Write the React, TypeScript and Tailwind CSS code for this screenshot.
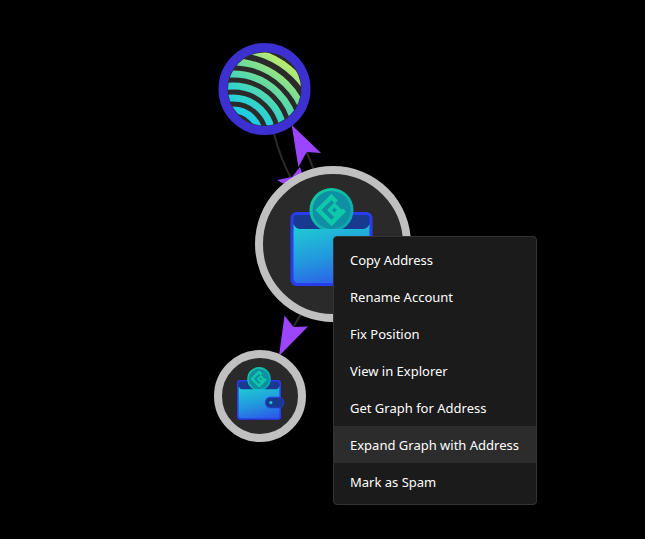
const menuItems = [
  'Copy Address',
  'Rename Account',
  'Fix Position',
  'View in Explorer',
  'Get Graph for Address',
  'Expand Graph with Address',
  'Mark as Spam',
]

const bandRadii = [27, 39, 51, 63, 75, 88]

// wallet drawn in a 82x74 box, the coin sticks out above it
function WalletIcon({ gid, clasp }: { gid: string; clasp?: boolean }) {
  return (
    <>
      <defs>
        <linearGradient id={gid} x1="0.35" y1="0" x2="0.65" y2="1">
          <stop offset="0" stopColor="#1ec8d4" />
          <stop offset="0.55" stopColor="#2296de" />
          <stop offset="1" stopColor="#2b5fe8" />
        </linearGradient>
        <linearGradient id={`${gid}-coin`} x1="0" y1="0" x2="1" y2="1">
          <stop offset="0" stopColor="#0fd0a0" />
          <stop offset="1" stopColor="#0f9fb0" />
        </linearGradient>
      </defs>
      <rect x="0" y="0" width="82" height="74" rx="6" fill="#2a3cf0" />
      <rect x="3" y="3" width="76" height="20" rx="3" fill="#17398f" />
      <circle cx="41" cy="-2" r="22" fill={`url(#${gid}-coin)`} />
      <circle cx="41" cy="-2" r="19" fill="#0f8fa4" />
      <path d="M46 -10 L41 -15 L28 -2 L41 11 L54 -2" fill="none" stroke="#0fc8a8" strokeWidth="4.5" />
      <path d="M44 -7 L49 -2 L44 3 L39 -2 Z" fill="#0f8fa4" stroke="#0fc8a8" strokeWidth="3.5" />
      <path d="M3 12 Q5 17 10 17 H72 Q77 17 79 12 V66 Q79 71 74 71 H8 Q3 71 3 66 Z" fill={`url(#${gid})`} />
      {clasp && (
        <>
          <rect x="53" y="32" width="34" height="20" rx="9" fill="#17398f" stroke="#2a3cf0" strokeWidth="1.5" />
          <circle cx="63" cy="42" r="3" fill="#1ec8d4" />
        </>
      )}
    </>
  )
}

function Graph() {
  return (
    <svg className="absolute inset-0" width="645" height="539" viewBox="0 0 645 539">
      <defs>
        <linearGradient id="arcs" gradientUnits="userSpaceOnUse" x1="244" y1="124" x2="292" y2="58">
          <stop offset="0" stopColor="#14c8f0" />
          <stop offset="0.3" stopColor="#34d4c8" />
          <stop offset="0.6" stopColor="#70dc98" />
          <stop offset="1" stopColor="#d0f064" />
        </linearGradient>
        <clipPath id="arcClip">
          <circle cx="264.5" cy="89" r="36.5" />
        </clipPath>
      </defs>

      {/* edges */}
      <path d="M274 134 Q281 160 291 178" fill="none" stroke="#2b2b2b" strokeWidth="2" />
      <path d="M305 148 L314 170" fill="none" stroke="#2b2b2b" strokeWidth="2" />
      <path d="M301 314 L292 329" fill="none" stroke="#2b2b2b" strokeWidth="2" />

      {/* arrows */}
      <polygon points="277,180 310,198 300,167 292,177" fill="#9b45ff" />
      <polygon points="291.7,125 321,153 306.7,152 298.3,167" fill="#9b45ff" />
      <polygon points="279,356 284.5,315.5 293.5,327 308,326.5" fill="#9b45ff" />

      {/* top node */}
      <circle cx="264.5" cy="89" r="41.5" fill="#2a2a2a" stroke="#3d30d0" strokeWidth="9" />
      <g clipPath="url(#arcClip)" fill="none" stroke="url(#arcs)" strokeWidth="7">
        {bandRadii.map((r) => (
          <circle key={r} cx="233" cy="137" r={r} />
        ))}
      </g>

      {/* center node */}
      <circle cx="333" cy="244" r="74" fill="#2a2a2a" stroke="#c0c0c0" strokeWidth="8" />
      <g transform="translate(290.5 212)">
        <WalletIcon gid="walletBig" />
      </g>

      {/* bottom node */}
      <circle cx="260" cy="396" r="42" fill="#2a2a2a" stroke="#c0c0c0" strokeWidth="8" />
      <g transform="translate(237 380) scale(0.537)">
        <WalletIcon gid="walletSmall" clasp />
      </g>
    </svg>
  )
}

export default function App() {
  return (
    <div className="relative h-[539px] w-[645px] overflow-hidden bg-black font-['Noto_Sans',sans-serif]">
      <Graph />
      <div className="absolute top-[236px] left-[333px] flex w-[204px] flex-col rounded border border-[#333333] bg-[#1b1b1b] py-[4px] text-[13px] text-white">
        {menuItems.map((item) => (
          <div
            key={item}
            className={`flex h-[37px] items-center px-4 pt-[2px] ${item === 'Expand Graph with Address' ? 'bg-[#2c2c2c]' : ''}`}
          >
            {item}
          </div>
        ))}
      </div>
    </div>
  )
}
